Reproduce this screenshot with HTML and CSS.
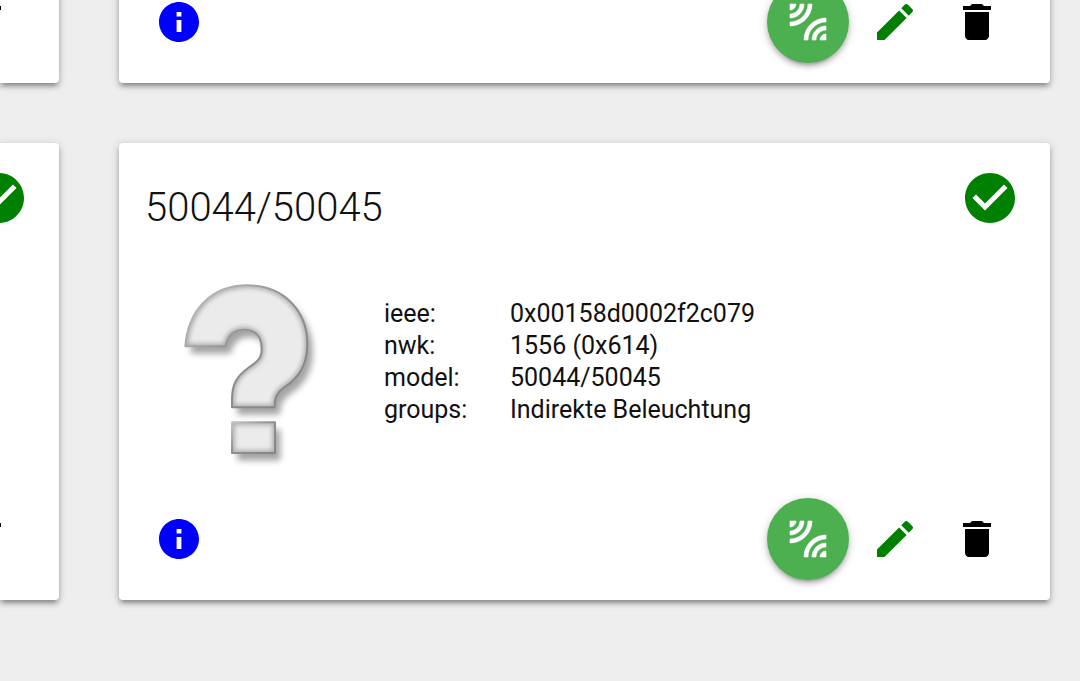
FILE: index.html
```
<!DOCTYPE html>
<html lang="de">
<head>
  <meta charset="UTF-8" />
  <meta name="viewport" content="width=device-width, initial-scale=1.0"/>
  <title>Zigbee</title>
  <link rel="stylesheet" href="styles.css">
</head>

<body>
  <!-- icon shapes shared by the cards -->
  <svg class="icon-defs" aria-hidden="true">
    <symbol id="icon-info" viewBox="0 0 24 24">
      <path d="M12 2C6.48 2 2 6.48 2 12s4.480 10 10 10 10-4.480 10-10S17.520 2 12 2zm1.200 15h-2.400v-6h2.400v6zm0-7.800h-2.400V7h2.400v2.200z"/>
    </symbol>
    <symbol id="icon-pair" viewBox="0 0 24 24">
      <path stroke="currentColor" stroke-width="0.3" d="M6 3H3v3c1.660 0 3-1.340 3-3zm8 0h-2c0 4.970-4.030 9-9 9v2c6.080 0 11-4.930 11-11zm-4 0H8c0 2.760-2.240 5-5 5v2c3.870 0 7-3.130 7-7zm0 18h2c0-4.970 4.030-9 9-9v-2c-6.070 0-11 4.930-11 11zm8 0h3v-3c-1.660 0-3 1.340-3 3zm-4 0h2c0-2.760 2.240-5 5-5v-2c-3.870 0-7 3.130-7 7z"/>
    </symbol>
    <symbol id="icon-edit" viewBox="0 0 24 24">
      <path d="M3 17.250V21h3.750L17.810 9.940l-3.750-3.750L3 17.250zM20.710 7.040a1 1 0 0 0 0-1.410l-2.340-2.340a1 1 0 0 0-1.410 0l-1.830 1.830 3.750 3.750 1.830-1.830z"/>
    </symbol>
    <symbol id="icon-delete" viewBox="0 0 24 24">
      <path d="M6 19c0 1.100.9 2 2 2h8c1.100 0 2-.9 2-2V7H6v12zM19 4h-3.500l-1-1h-5l-1 1H5v2h14V4z"/>
    </symbol>
    <symbol id="icon-check" viewBox="0 0 24 24">
      <path d="M12 2C6.480 2 2 6.480 2 12s4.480 10 10 10 10-4.480 10-10S17.520 2 12 2zm-2 15l-5-5 1.410-1.410L10 14.170l7.590-7.590L19 8l-9 9z"/>
    </symbol>
  </svg>

  <main class="devices">
    <section class="card card-side">
      <div class="card-actions">
        <button class="icon-button delete" aria-label="Delete"><svg class="icon"><use href="#icon-delete"/></svg></button>
      </div>
    </section>

    <section class="card">
      <div class="card-actions">
        <button class="icon-button info" aria-label="Info"><svg class="icon"><use href="#icon-info"/></svg></button>
        <button class="icon-button pair" aria-label="Pair"><svg class="icon"><use href="#icon-pair"/></svg></button>
        <button class="icon-button edit" aria-label="Edit"><svg class="icon"><use href="#icon-edit"/></svg></button>
        <button class="icon-button delete" aria-label="Delete"><svg class="icon"><use href="#icon-delete"/></svg></button>
      </div>
    </section>

    <section class="card card-side">
      <div class="card-header">
        <svg class="status"><use href="#icon-check"/></svg>
      </div>
      <div class="card-actions">
        <button class="icon-button delete" aria-label="Delete"><svg class="icon"><use href="#icon-delete"/></svg></button>
      </div>
    </section>

    <section class="card">
      <div class="card-header">
        <h2 class="card-title">50044/50045</h2>
        <svg class="status"><use href="#icon-check"/></svg>
      </div>

      <div class="card-content">
        <svg class="device-image" viewBox="0 0 600 630" aria-hidden="true">
          <defs>
            <linearGradient id="edge" x1="0" y1="0" x2="1" y2="1">
              <stop offset="0" stop-color="#c4c4c4"/>
              <stop offset="0.5" stop-color="#8e8e8e"/>
              <stop offset="1" stop-color="#858585"/>
            </linearGradient>
            <filter id="drop" x="-20%" y="-20%" width="150%" height="150%">
              <feDropShadow dx="16" dy="22" stdDeviation="10" flood-color="#000" flood-opacity="0.36"/>
            </filter>
            <filter id="soft">
              <feGaussianBlur stdDeviation="6"/>
            </filter>
            <path id="hook" d="M106 229C114 120 184 46 292 46C400 46 472 122 472 222C472 288 444 326 400 354C380 368 374 384 374 412H246V388C246 344 258 320 298 291C324 274 335 264 335 236C335 200 316 179 282 179C248 179 232 200 226 229Z"/>
            <path id="dot" d="M246 457H375V549H246Z"/>
            <clipPath id="inside"><use href="#hook"/><use href="#dot"/></clipPath>
          </defs>
          <g filter="url(#drop)" fill="#ebebeb">
            <use href="#hook"/>
            <use href="#dot"/>
          </g>
          <g clip-path="url(#inside)" fill="none">
            <g stroke="#b0b0b0" stroke-width="18" filter="url(#soft)">
              <use href="#hook"/>
              <use href="#dot"/>
            </g>
          </g>
          <g fill="none" stroke="url(#edge)" stroke-width="6" stroke-linejoin="round">
            <use href="#hook"/>
            <use href="#dot"/>
          </g>
        </svg>

        <table class="details">
          <tr><th scope="row">ieee:</th><td>0x00158d0002f2c079</td></tr>
          <tr><th scope="row">nwk:</th><td>1556 (0x614)</td></tr>
          <tr><th scope="row">model:</th><td>50044/50045</td></tr>
          <tr><th scope="row">groups:</th><td>Indirekte Beleuchtung</td></tr>
        </table>
      </div>

      <div class="card-actions">
        <button class="icon-button info" aria-label="Info"><svg class="icon"><use href="#icon-info"/></svg></button>
        <button class="icon-button pair" aria-label="Pair"><svg class="icon"><use href="#icon-pair"/></svg></button>
        <button class="icon-button edit" aria-label="Edit"><svg class="icon"><use href="#icon-edit"/></svg></button>
        <button class="icon-button delete" aria-label="Delete"><svg class="icon"><use href="#icon-delete"/></svg></button>
      </div>
    </section>
  </main>
</body>
</html>
```
FILE: styles.css
```
body {
  margin: 0;
  background: #eee;
  color: #111;
  font-family: Roboto, sans-serif;
  font-size: 25px;
  line-height: 32px;
  overflow: hidden;
}

.icon-defs {
  display: none;
}

/* the list is scrolled to its end */
.devices {
  display: grid;
  grid-template-columns: 59px 1fr;
  gap: 60px;
  align-content: end;
  box-sizing: border-box;
  height: 100vh;
  padding: 0 30px 81px 0;
}

/* CARDS */
.card {
  display: flex;
  flex-direction: column;
  justify-content: space-between;
  background: #fff;
  border-radius: 4px;
  box-shadow: 0 4px 4px rgba(0, 0, 0, 0.2), 0 6px 2px -4px rgba(0, 0, 0, 0.12), 0 2px 10px rgba(0, 0, 0, 0.2);
}

.card-side {
  border-radius: 0 4px 4px 0;
}

.card-header {
  display: flex;
  justify-content: flex-end;
  padding: 25px 30px 0 26px;
}

.card-title {
  flex: 1;
  margin: 0;
  padding-top: 10px;
  font-size: 40px;
  font-weight: 300;
  line-height: 60px;
}

.status {
  flex: none;
  width: 60px;
  height: 60px;
  fill: green;
}

.card-content {
  display: flex;
  align-items: flex-start;
  gap: 34px;
  padding: 32px 30px 18px 31px;
}

.device-image {
  flex: none;
  width: 200px;
  height: 210px;
}

.details {
  margin-top: 28px;
  border-collapse: collapse;
}

.details th,
.details td {
  padding: 0;
  font-weight: 400;
  text-align: left;
}

.details th {
  width: 126px;
}

/* ACTION BUTTONS */
.card-actions {
  display: flex;
  justify-content: flex-end;
  padding: 0 32px 20px 19px;
}

.card-side .card-actions {
  padding-right: 31px;
}

.icon-button {
  display: flex;
  flex: none;
  align-items: center;
  justify-content: center;
  width: 82px;
  height: 82px;
  padding: 0;
  border: none;
  border-radius: 50%;
  background: none;
  cursor: pointer;
}

.icon {
  width: 48px;
  height: 48px;
  fill: currentColor;
}

.info {
  margin-right: auto;
  color: blue;
}

.pair {
  margin-right: 5px;
  background: #4caf50;
  color: #fff;
  box-shadow: 0 4px 4px rgba(0, 0, 0, 0.14), 0 6px 2px -4px rgba(0, 0, 0, 0.12), 0 2px 10px rgba(0, 0, 0, 0.2);
}

.edit {
  color: green;
}

.delete {
  color: #000;
}
```
